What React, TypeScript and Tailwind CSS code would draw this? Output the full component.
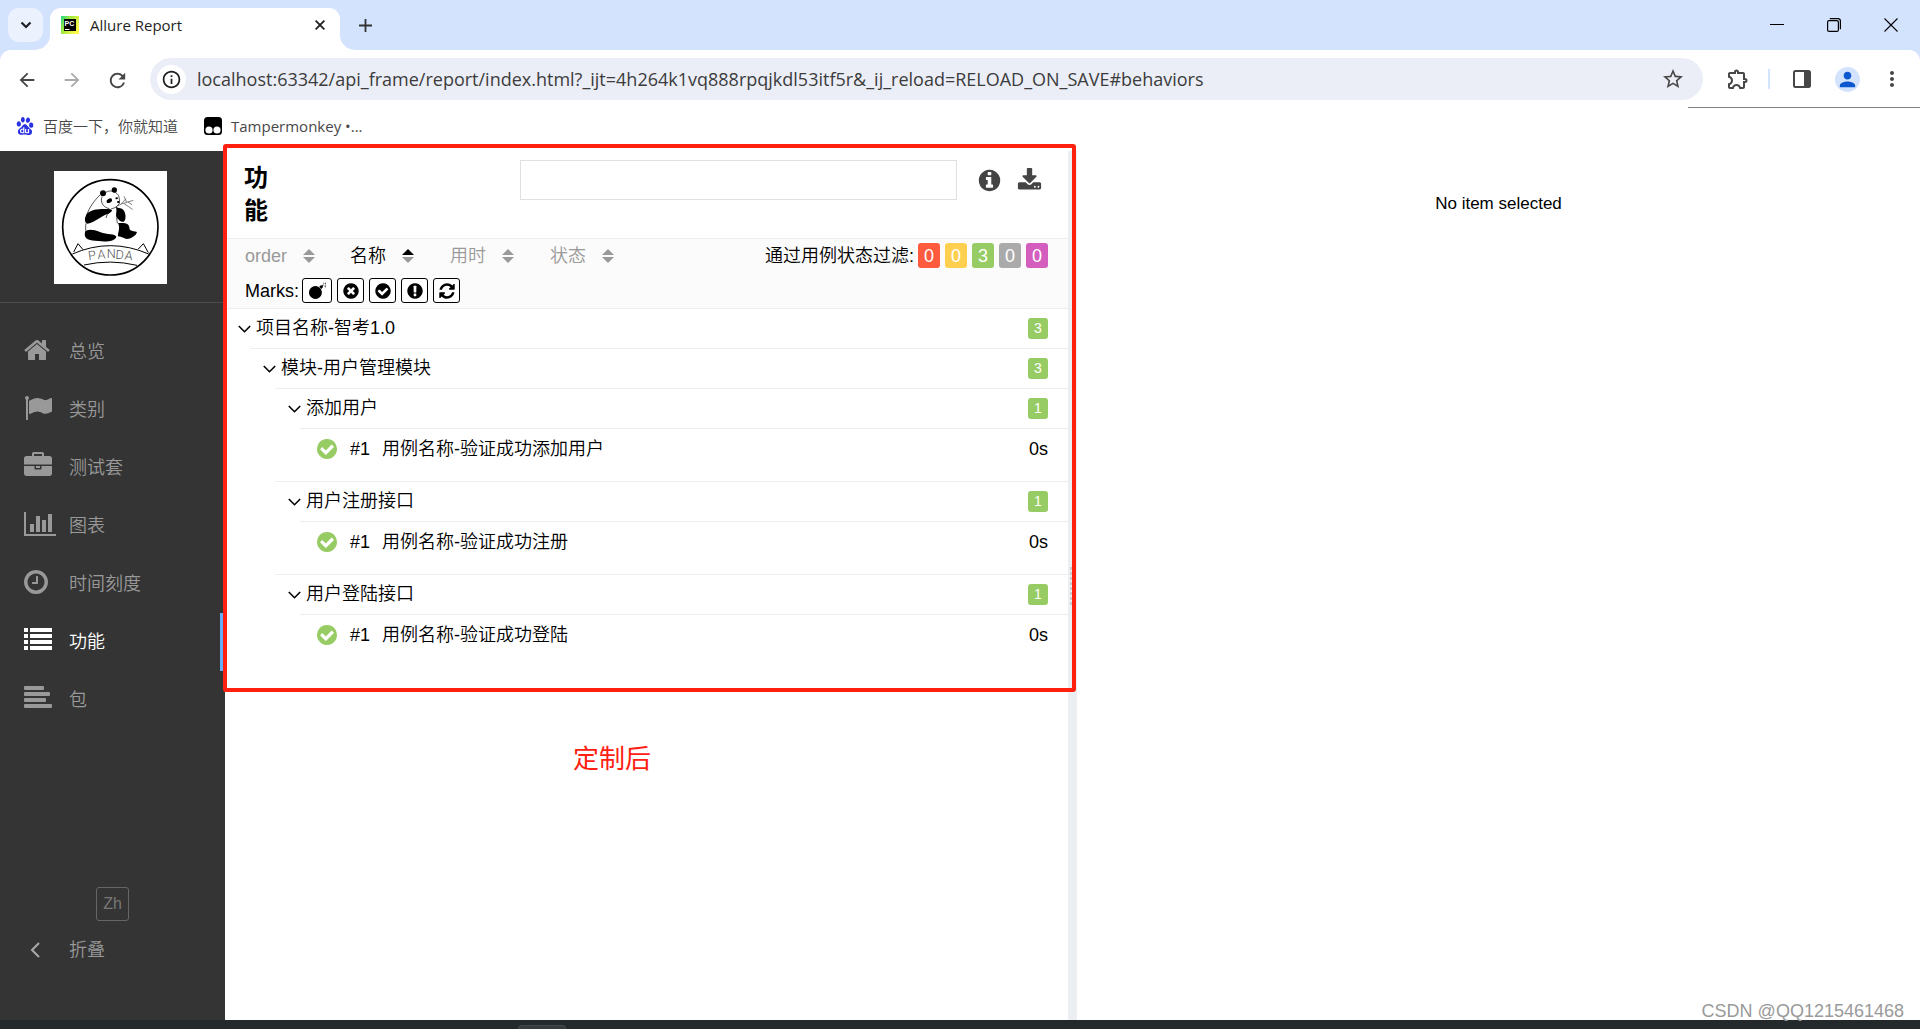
import type { ReactNode } from "react";
import {
  MdArrowBack,
  MdArrowForward,
  MdInfoOutline,
  MdMoreVert,
  MdOutlineExtension,
  MdPerson,
  MdRefresh,
  MdStarBorder,
} from "react-icons/md";
import { SiBaidu } from "react-icons/si";

const disc =
  "m387-226q0 209-103 385.5t-279.5 279.5-385.5 103-385.5-103-279.5-279.5-103-385.5 103-385.5 279.5-279.5 385.5-103 385.5 103 279.5 279.5 103 385.5z";

const glyphs = {
  home: "M1472 992v480q0 26-19 45t-45 19h-384v-384h-256v384h-384q-26 0-45-19t-19-45v-480q0-1 .5-3t.5-3l575-474 575 474q1 2 1 6zm223-69l-62 74q-8 9-21 11h-3q-13 0-21-7l-692-577-692 577q-12 8-24 7-13-2-21-11l-62-74q-8-10-7-23.5t11-21.5l719-599q32-26 76-26t76 26l244 204v-195q0-14 9-23t23-9h192q14 0 23 9t9 23v408l219 182q10 8 11 21.5t-7 23.5z",
  flag: "M320 256q0 72-64 110v1266q0 13-9.5 22.5t-22.5 9.5h-64q-13 0-22.5-9.5t-9.5-22.5v-1266q-64-38-64-110 0-53 37.5-90.5t90.5-37.5 90.5 37.5 37.5 90.5zm1472 64v763q0 25-12.5 38.5t-39.5 27.5q-215 116-369 116-61 0-123.5-22t-108.5-48-115.5-48-142.5-22q-192 0-464 146-17 9-33 9-26 0-45-19t-19-45v-742q0-32 31-55 21-14 79-43 236-120 421-120 107 0 200 29t219 88q38 19 88 19 54 0 117.5-21t110-47 88-47 54.5-21q26 0 45 19t19 45z",
  briefcase:
    "M640 256h512v-128h-512v128zm1152 640v480q0 66-47 113t-113 47h-1472q-66 0-113-47t-47-113v-480h672v160q0 26 19 45t45 19h320q26 0 45-19t19-45v-160h672zm-768 0v128h-256v-128h256zm768-480v384h-1792v-384q0-66 47-113t113-47h352v-160q0-40 28-68t68-28h576q40 0 68 28t28 68v160h352q66 0 113 47t47 113z",
  chart:
    "M640 896v512h-256v-512h256zm384-512v1024h-256v-1024h256zm1024 1152v128h-2048v-1536h128v1408h1920zm-640-896v768h-256v-768h256zm384-384v1152h-256v-1152h256z",
  clock:
    "M1024 544v448q0 14-9 23t-23 9h-320q-14 0-23-9t-9-23v-64q0-14 9-23t23-9h224v-352q0-14 9-23t23-9h64q14 0 23 9t9 23zm416 352q0-148-73-273t-198-198-273-73-273 73-198 198-73 273 73 273 198 198 273 73 273-73 198-198 73-273zm224 0q0 209-103 385.5t-279.5 279.5-385.5 103-385.5-103-279.5-279.5-103-385.5 103-385.5 279.5-279.5 385.5-103 385.5 103 279.5 279.5 103 385.5z",
  list: "M0 128h256v256h-256zM384 128h1408v256h-1408zM0 512h256v256h-256zM384 512h1408v256h-1408zM0 896h256v256h-256zM384 896h1408v256h-1408zM0 1280h256v256h-256zM384 1280h1408v256h-1408z",
  align:
    "M64 128h1152q64 0 64 64v128q0 64-64 64h-1152q-64 0-64-64v-128q0-64 64-64zM64 512h1536q64 0 64 64v128q0 64-64 64h-1536q-64 0-64-64v-128q0-64 64-64zM64 896h1280q64 0 64 64v128q0 64-64 64h-1280q-64 0-64-64v-128q0-64 64-64zM64 1280h1664q64 0 64 64v128q0 64-64 64h-1664q-64 0-64-64v-128q0-64 64-64z",
  bomb: "M740 400a640 640 0 1 0 .1 0zM1120 480l190-170 190 190-170 190zM1380 380l120-130 70 60-120 140zM1560 40l40 120-50 20-30-120zM1760 60l50 50-120 100-40-50zM1820 280v60l-150-10v-50zM1680 400l120 90-40 50-120-100z",
  times: "M1277 1122q0-26-19-45l-181-181 181-181q19-19 19-45 0-27-19-46l-90-90q-19-18-46-18-26 0-45 19l-181 181-181-181q-19-19-45-19-27 0-46 18l-90 90q-19 19-19 46 0 26 19 45l181 181-181 181q-19 19-19 45 0 27 19 46l90 90q19 18 46 18 26 0 45-19l181-181 181 181q19 19 45 19 27 0 46-18l90-90q19-19 19-46z" + disc,
  check:
    "M1412 734q0-28-18-46l-91-90q-19-19-45-19t-45 19l-408 407-226-226q-19-19-45-19t-45 19l-91 90q-18 18-18 46 0 27 18 45l362 362q19 19 45 19 27 0 46-19l543-543q18-18 18-45zm252 162q0 209-103 385.5t-279.5 279.5-385.5 103-385.5-103-279.5-279.5-103-385.5 103-385.5 279.5-279.5 385.5-103 385.5 103 279.5 279.5 103 385.5z",
  exclamation:
    "M896 128q209 0 385.5 103t279.5 279.5 103 385.5-103 385.5-279.5 279.5-385.5 103-385.5-103-279.5-279.5-103-385.5 103-385.5 279.5-279.5 385.5-103zm128 1247v-190q0-14-9-23.5t-22-9.5h-192q-13 0-23 10t-10 23v190q0 13 10 23t23 10h192q13 0 22-9.5t9-23.5zm-2-344l18-621q0-12-10-18-10-8-24-8h-220q-14 0-24 8-10 6-10 18l17 621q0 10 10 17.5t24 7.5h185q14 0 23.5-7.5t10.5-17.5z",
  refresh:
    "M1639 1056q0 5-1 7-64 268-268 434.5t-478 166.5q-146 0-282.5-55t-243.5-157l-129 129q-19 19-45 19t-45-19-19-45v-448q0-26 19-45t45-19h448q26 0 45 19t19 45-19 45l-137 137q71 66 161 102t187 36q134 0 250-65t186-179q11-17 53-117 8-23 30-23h192q13 0 22.5 9.5t9.5 22.5zm25-800v448q0 26-19 45t-45 19h-448q-26 0-45-19t-19-45 19-45l138-138q-148-137-349-137-134 0-250 65t-186 179q-11 17-53 117-8 23-30 23h-199q-13 0-22.5-9.5t-9.5-22.5v-7q65-268 270-434.5t480-166.5q146 0 284 55.5t245 156.5l130-129q19-19 45-19t45 19 19 45z",
  info: "M1152 1376v-160q0-14-9-23t-23-9h-96v-512q0-14-9-23t-23-9h-320q-14 0-23 9t-9 23v160q0 14 9 23t23 9h96v320h-96q-14 0-23 9t-9 23v160q0 14 9 23t23 9h448q14 0 23-9t9-23zm-128-896v-160q0-14-9-23t-23-9h-192q-14 0-23 9t-9 23v160q0 14 9 23t23 9h192q14 0 23-9t9-23zm640 416q0 209-103 385.5t-279.5 279.5-385.5 103-385.5-103-279.5-279.5-103-385.5 103-385.5 279.5-279.5 385.5-103 385.5 103 279.5 279.5 103 385.5z",
  download:
    "M1344 1344q0-26-19-45t-45-19-45 19-19 45 19 45 45 19 45-19 19-45zm256 0q0-26-19-45t-45-19-45 19-19 45 19 45 45 19 45-19 19-45zm128-224v320q0 40-28 68t-68 28h-1472q-40 0-68-28t-28-68v-320q0-40 28-68t68-28h465l135 136q58 56 136 56t136-56l136-136h464q40 0 68 28t28 68zm-325-569q17 41-14 70l-448 448q-18 19-45 19t-45-19l-448-448q-31-29-14-70 17-39 59-39h256v-448q0-26 19-45t45-19h256q26 0 45 19t19 45v448h256q42 0 59 39z",
};

type GlyphName = keyof typeof glyphs;

function Glyph({ name, className, box = "0 0 1792 1792" }: { name: GlyphName; className: string; box?: string }) {
  return (
    <svg viewBox={box} className={className} fill="currentColor" aria-hidden="true">
      <path d={glyphs[name]} />
    </svg>
  );
}

const navItems: { icon: GlyphName; label: string; box?: string; wide?: boolean; active?: boolean }[] = [
  { icon: "home", label: "总览", box: "64 0 1792 1792" },
  { icon: "flag", label: "类别" },
  { icon: "briefcase", label: "测试套" },
  { icon: "chart", label: "图表", box: "0 0 2048 1792", wide: true },
  { icon: "clock", label: "时间刻度", box: "128 0 1792 1792" },
  { icon: "list", label: "功能", active: true },
  { icon: "align", label: "包" },
];

const sorters = [
  { label: "order", width: "w-[105px]" },
  { label: "名称", width: "w-[100px]", active: true },
  { label: "用时", width: "w-[100px]" },
  { label: "状态", width: "w-[100px]" },
];

const statuses = [
  { name: "failed", count: 0, color: "bg-[#fd5a3e]" },
  { name: "broken", count: 0, color: "bg-[#ffd050]" },
  { name: "passed", count: 3, color: "bg-[#97cc64]" },
  { name: "skipped", count: 0, color: "bg-[#aaaaaa]" },
  { name: "unknown", count: 0, color: "bg-[#d35ebe]" },
];

const marks: { icon: GlyphName; label: string; width: string }[] = [
  { icon: "bomb", label: "flaky", width: "w-[30px]" },
  { icon: "times", label: "new failed", width: "w-[27px]" },
  { icon: "check", label: "new passed", width: "w-[27px]" },
  { icon: "exclamation", label: "new broken", width: "w-[27px]" },
  { icon: "refresh", label: "retries", width: "w-[27px]" },
];

type Node = { name: string; count?: number; time?: string; children?: Node[] };

const tree: Node[] = [
  {
    name: "项目名称-智考1.0",
    count: 3,
    children: [
      {
        name: "模块-用户管理模块",
        count: 3,
        children: [
          { name: "添加用户", count: 1, children: [{ name: "用例名称-验证成功添加用户", time: "0s" }] },
          { name: "用户注册接口", count: 1, children: [{ name: "用例名称-验证成功注册", time: "0s" }] },
          { name: "用户登陆接口", count: 1, children: [{ name: "用例名称-验证成功登陆", time: "0s" }] },
        ],
      },
    ],
  },
];

function IconButton({ label, className, children }: { label: string; className: string; children: ReactNode }) {
  return (
    <button type="button" aria-label={label} className={`grid shrink-0 place-items-center ${className}`}>
      {children}
    </button>
  );
}

function TabStrip() {
  return (
    <div className="flex h-[50px] items-start bg-[#d3e3fd] pl-2">
      <IconButton label="Search tabs" className="mt-2 h-[34px] w-[35px] rounded-[11px] bg-[#ebf2fe]">
        <svg viewBox="0 0 12 8" className="h-2 w-3" fill="none" stroke="#1f1f1f" strokeWidth="2.2">
          <path d="M1.5 1.5 6 6l4.500-4.500" />
        </svg>
      </IconButton>
      <div className="relative ml-[7px] mt-2 flex h-[42px] w-[290px] items-center rounded-t-[11px] bg-white pb-2 pl-[11px] pr-[13px]">
        <svg viewBox="0 0 15 15" className="absolute -left-[15px] bottom-0 size-[15px]" fill="#fff">
          <path d="M15 0v15H0A15 15 0 0 0 15 0z" />
        </svg>
        <svg viewBox="0 0 15 15" className="absolute -right-[15px] bottom-0 size-[15px]" fill="#fff">
          <path d="M0 0v15h15A15 15 0 0 1 0 0z" />
        </svg>
        <svg viewBox="0 0 18 18" className="size-[18px] shrink-0">
          <defs>
            <linearGradient id="pc" x1="0" x2="1" y1="0" y2="0.6">
              <stop offset="0" stopColor="#21d789" />
              <stop offset="0.4" stopColor="#9be83c" />
              <stop offset="1" stopColor="#fcf84a" />
            </linearGradient>
          </defs>
          <path d="M0 0h18v18H0z" fill="url(#pc)" />
          <path d="M3 3h12v12H3z" fill="#000" />
          <path d="M4 13h4.500v1H4z" fill="#fff" />
          <text x="3.500" y="9.500" fill="#fff" fontSize="7" fontWeight="700" fontFamily="Liberation Sans, sans-serif">
            PC
          </text>
        </svg>
        <span className="ml-[11px] flex-1 text-[15px] leading-5 text-[#1f1f1f]">Allure Report</span>
        <IconButton label="Close tab" className="size-[14px]">
          <svg viewBox="0 0 10 10" className="size-[10px]" stroke="#1f1f1f" strokeWidth="1.8">
            <path d="M.6.6l8.800 8.800M9.400.6.6 9.400" />
          </svg>
        </IconButton>
      </div>
      <IconButton label="New tab" className="ml-[15px] mt-[15px] size-5">
        <svg viewBox="0 0 13 13" className="size-[13px]" stroke="#333" strokeWidth="1.800">
          <path d="M6.500 0v13M0 6.500h13" />
        </svg>
      </IconButton>
      <div className="ml-auto flex h-[50px] items-center gap-[37px] pr-[19px]">
        <IconButton label="Minimize" className="size-5">
          <svg viewBox="0 0 14 14" className="size-[14px]" stroke="#000">
            <path d="M0 6.500h14" />
          </svg>
        </IconButton>
        <IconButton label="Restore" className="size-5">
          <svg viewBox="0 0 14 14" className="size-[14px]" fill="none" stroke="#000" strokeWidth="1.200">
            <rect x=".6" y="2.600" width="10.800" height="10.800" rx="1.500" />
            <path d="M2.800.6h8.200a2.400 2.400 0 0 1 2.400 2.400v8.200" />
          </svg>
        </IconButton>
        <IconButton label="Close window" className="size-5">
          <svg viewBox="0 0 14 14" className="size-[14px]" stroke="#000" strokeWidth="1.100">
            <path d="M.5.5l13 13M13.500.5l-13 13" />
          </svg>
        </IconButton>
      </div>
    </div>
  );
}

function AddressBar() {
  return (
    <div className="bg-[#d3e3fd]">
      <div className="flex h-[58px] items-center rounded-t-[11px] bg-white px-4">
        <div className="flex gap-6 text-[#474747]">
          <IconButton label="Back" className="size-[21px]">
            <MdArrowBack className="size-[22px]" />
          </IconButton>
          <IconButton label="Forward" className="size-[21px] text-[#ababab]">
            <MdArrowForward className="size-[22px]" />
          </IconButton>
          <IconButton label="Reload" className="size-[21px]">
            <MdRefresh className="size-[23px]" />
          </IconButton>
        </div>
        <div className="ml-[23px] flex h-[42px] flex-1 items-center rounded-full bg-[#ebeef7] pl-[7px] pr-[18px]">
          <IconButton label="Site information" className="size-[29px] rounded-full bg-white text-[#1f1f1f]">
            <MdInfoOutline className="size-[21px]" />
          </IconButton>
          <input
            type="text"
            aria-label="Address"
            defaultValue="localhost:63342/api_frame/report/index.html?_ijt=4h264k1vq888rpqjkdl53itf5r&_ij_reload=RELOAD_ON_SAVE#behaviors"
            className="ml-[11px] flex-1 bg-transparent text-lg text-[#3c3c3c] outline-none"
          />
          <IconButton label="Bookmark" className="size-6 text-[#474747]">
            <MdStarBorder className="size-6" />
          </IconButton>
        </div>
        <IconButton label="Extensions" className="ml-[23px] size-6 text-[#474747]">
          <MdOutlineExtension className="size-6" />
        </IconButton>
        <span className="ml-[18px] h-5 w-0.5 bg-[#d3e3fd]" />
        <IconButton label="Side panel" className="ml-[23px] size-[18px]">
          <svg viewBox="0 0 18 18" className="size-[18px]">
            <rect x="1" y="1" width="16" height="16" rx="1.500" fill="none" stroke="#474747" strokeWidth="2" />
            <path d="M11 1h6v16h-6z" fill="#474747" />
          </svg>
        </IconButton>
        <IconButton label="Profile" className="ml-6 size-[25px] rounded-full bg-[#d3e3fd] text-[#0b57d0]">
          <MdPerson className="size-[23px]" />
        </IconButton>
        <IconButton label="Menu" className="ml-5 size-6 text-[#474747]">
          <MdMoreVert className="size-6" />
        </IconButton>
      </div>
    </div>
  );
}

function BookmarksBar() {
  return (
    <nav className="relative flex h-[43px] items-center bg-white pb-2 pl-4 text-[15px] leading-5 text-[#474747]">
      <a href="#baidu" className="flex items-center gap-[9px] font-[350]">
        <SiBaidu className="size-[18px] text-[#2932e1]" />
        百度一下，你就知道
      </a>
      <a href="#tampermonkey" className="ml-[26px] flex items-center gap-[9px]">
        <svg viewBox="0 0 18 18" className="size-[18px]">
          <rect width="18" height="18" rx="3.500" fill="#000" />
          <circle cx="5" cy="13" r="3.600" fill="#fff" />
          <circle cx="13" cy="13" r="3.600" fill="#fff" />
        </svg>
        Tampermonkey •...
      </a>
      <span className="absolute right-0 -top-px h-px w-[232px] bg-[#808080]" />
    </nav>
  );
}

function PandaLogo() {
  return (
    <svg viewBox="162 93 339 339" className="size-[113px] bg-white" fill="none" stroke="#000" role="img" aria-label="Panda">
      <circle cx="331" cy="262" r="143" strokeWidth="5" />
      <g fill="#000" stroke="none">
        <circle cx="309" cy="160" r="9" />
        <circle cx="343" cy="150" r="8" />
        <ellipse cx="328" cy="182" rx="9" ry="6" transform="rotate(-30 328 182)" />
        <ellipse cx="350" cy="175" rx="4" ry="3" />
        <ellipse cx="355" cy="186" rx="4" ry="3" />
        <path d="M262 220C275 207 300 206 325 207 341 208 338 214 326 221 304 225 288 247 262 251 252 249 253 230 262 220z" />
        <path d="M347 200C356 206 366 202 372 212 378 222 379 240 371 245 362 248 357 238 350 233 345 222 353 212 347 200z" />
        <path d="M255 276C262 266 280 268 300 276 322 285 345 280 349 290 345 303 320 307 295 303 270 302 250 300 255 276z" />
        <path d="M354 249C368 250 386 246 388 262 388 274 397 272 411 276 409 287 392 297 380 297 370 294 366 291 354 289 353 276 362 266 354 249z" />
      </g>
      <g strokeWidth="2">
        <path d="M300 165C284 180 266 205 261 224M318 157C328 151 336 152 347 158 358 164 359 176 358 190 352 200 344 205 334 206M306 170C300 188 310 202 328 206M258 250C256 260 257 268 258 278M326 210 318 234M350 234 352 250" />
        <path stroke="#444" d="M350 199 364 192 380 187 372 169M380 187 400 181M372 191 386 200 398 209M364 192 378 176M384 186 396 194" />
      </g>
      <g strokeWidth="3">
        <path d="M217 342Q331 292 446 342M252 375Q331 357 411 376M221 336 234 311 249 329M415 327 430 311 445 338" />
      </g>
      <text
        x="266 293 320 346 373"
        y="361 357 355 356 358"
        rotate="-8 -4 0 4 8"
        fill="#555"
        stroke="none"
        fontSize="38"
        fontWeight="300"
        fontFamily="Roboto, sans-serif"
      >
        PANDA
      </text>
    </svg>
  );
}

function Sidebar() {
  return (
    <aside className="flex w-[225px] shrink-0 flex-col bg-[#343434] text-lg leading-6 text-[#999]">
      <div className="flex justify-center border-b border-[#4d4d4d] pb-[18px] pr-1 pt-5">
        <PandaLogo />
      </div>
      <ul className="pt-5">
        {navItems.map((item) => (
          <li key={item.label}>
            <a
              href={`#${item.icon}`}
              className={
                item.active
                  ? "flex h-[58px] items-center border-r-[5px] border-[#64b0f8] pl-6 text-white"
                  : "flex h-[58px] items-center pl-6"
              }
            >
              <span className="w-[45px] pb-1">
                <Glyph name={item.icon} box={item.box} className={item.wide ? "h-7 w-8" : "size-7"} />
              </span>
              {item.label}
            </a>
          </li>
        ))}
      </ul>
      <div className="mt-auto flex flex-col pb-[41px]">
        <button type="button" className="h-[34px] w-[33px] self-center rounded-[3px] border border-[#666] text-base text-[#777]">
          Zh
        </button>
        <button type="button" className="flex h-[58px] items-center pl-[30px] text-left">
          <span className="w-[39px]">
            <svg viewBox="0 0 10 16" className="h-4 w-[10px]" fill="none" stroke="#aaa" strokeWidth="2">
              <path d="M9 1 2 8l7 7" />
            </svg>
          </span>
          折叠
        </button>
      </div>
    </aside>
  );
}

function Toolbar() {
  return (
    <div className="flex h-[70px] flex-col border-t border-[#eceff1] bg-[#fbfbfb] px-5 pt-1">
      <div className="flex h-[25px] items-center">
        {sorters.map((s) => (
          <button
            key={s.label}
            type="button"
            className={`flex items-center ${s.width} ${s.active ? "text-black" : "text-[#999]"}`}
          >
            {s.label}
            <svg viewBox="0 0 12 14" className="ml-4 h-[14px] w-3">
              <path d="M6 0l6 6H0z" fill={s.active ? "#000" : "#999"} />
              <path d="M6 14l6-6H0z" fill="#999" />
            </svg>
          </button>
        ))}
        <span className="ml-auto mr-1 whitespace-nowrap">通过用例状态过滤:</span>
        <div className="flex gap-[5px]">
          {statuses.map((s) => (
            <button key={s.name} type="button" title={s.name} className={`h-[25px] w-[22px] rounded-[3px] font-normal text-white ${s.color}`}>
              {s.count}
            </button>
          ))}
        </div>
      </div>
      <div className="mt-2.5 flex h-[25px] items-center">
        <span>Marks:</span>
        <div className="ml-[3px] flex gap-[5px]">
          {marks.map((m) => (
            <button
              key={m.icon}
              type="button"
              aria-label={m.label}
              className={`grid h-[25px] place-items-center rounded-[3px] border border-black bg-white ${m.width}`}
            >
              <Glyph name={m.icon} className="size-[18px]" />
            </button>
          ))}
        </div>
      </div>
    </div>
  );
}

function TreeItem({ node, order }: { node: Node; order: number }) {
  if (!node.children) {
    return (
      <li className="h-[53px]">
        <a href={`#case-${order}`} className="flex h-10 items-center border-t border-[#eceff1] pl-[17px] pr-5">
          <Glyph name="check" box="128 128 1536 1536" className="size-5 text-[#97cc64]" />
          <span className="ml-[13px] w-8">#{order}</span>
          <span className="flex-1">{node.name}</span>
          <span>{node.time}</span>
        </a>
      </li>
    );
  }
  return (
    <li>
      <button type="button" aria-expanded="true" className="flex h-10 w-full items-center border-t border-[#eceff1] pl-[13px] pr-5 text-left">
        <svg viewBox="0 0 13 8" className="h-2 w-[13px]" fill="none" stroke="#000" strokeWidth="1.600">
          <path d="M.8 1l5.700 5.700L12.200 1" />
        </svg>
        <span className="ml-[5px] flex-1 pb-0.5">{node.name}</span>
        <span className="h-[21px] w-5 rounded-[3px] bg-[#97cc64] text-center text-sm leading-[21px] font-normal text-white">{node.count}</span>
      </button>
      <ul className="pl-[25px]">
        {node.children.map((child, i) => (
          <TreeItem key={child.name} node={child} order={i + 1} />
        ))}
      </ul>
    </li>
  );
}

function BehaviorsPane() {
  return (
    <section className="min-w-0 flex-1">
      <div className="relative pb-[21px]">
        <div className="flex h-[87px] items-start pl-[19px] pr-[26px]">
          <h1 className="mt-2.5 w-6 text-2xl leading-[33px] font-bold">功能</h1>
          <input
            type="search"
            aria-label="Search"
            className="ml-auto mt-[9px] h-10 w-[437px] border border-[#e0e0e0] bg-white px-3 outline-none"
          />
          <IconButton label="Info" className="ml-5 mt-[17px] size-[25px] text-[#444]">
            <Glyph name="info" className="size-[25px]" />
          </IconButton>
          <IconButton label="Download CSV" className="ml-[15px] mt-[17px] size-[25px] text-[#444]">
            <Glyph name="download" className="size-[25px]" />
          </IconButton>
        </div>
        <Toolbar />
        <ul>
          {tree.map((node, i) => (
            <TreeItem key={node.name} node={node} order={i + 1} />
          ))}
        </ul>
        {/* red highlight frame around the customised tree */}
        <div className="pointer-events-none absolute -bottom-1 -left-0.5 -right-2 -top-[7px] z-10 rounded-[3px] border-4 border-[#ff2010]" />
      </div>
      <p className="ml-[348px] mt-[53px] text-[26px] leading-9 font-normal text-[#ff2010]">定制后</p>
    </section>
  );
}

function Splitter() {
  return (
    <div className="flex w-[9px] shrink-0 flex-col items-center justify-center bg-[#eceff1]">
      <div className="flex flex-col gap-0.5">
        {Array.from({ length: 8 }, (_, i) => (
          <i key={i} className="h-[3px] w-[5px] bg-[#ccc]" />
        ))}
      </div>
    </div>
  );
}

export default function App() {
  return (
    <div className="relative flex min-h-screen flex-col bg-white font-['Open_Sans','Noto_Sans_CJK_SC',sans-serif]">
      <header>
        <TabStrip />
        <AddressBar />
        <BookmarksBar />
      </header>
      <main className="flex flex-1 font-['Liberation_Sans','Noto_Sans_CJK_SC',sans-serif] text-lg leading-6 font-[350] text-black">
        <Sidebar />
        <BehaviorsPane />
        <Splitter />
        <section className="flex-1 pt-[41px] text-center text-[17px]">No item selected</section>
      </main>
      <footer className="flex h-[9px] items-end bg-[#24292b] pl-[518px]">
        <span className="h-1 w-12 rounded-t-[4px] border border-b-0 border-[#444a4c] bg-[#363b3d]" />
      </footer>
      <span className="absolute bottom-1.5 right-4 font-['Liberation_Sans',sans-serif] text-lg leading-6 text-[#9a9a9a]">
        CSDN @QQ1215461468
      </span>
    </div>
  );
}
